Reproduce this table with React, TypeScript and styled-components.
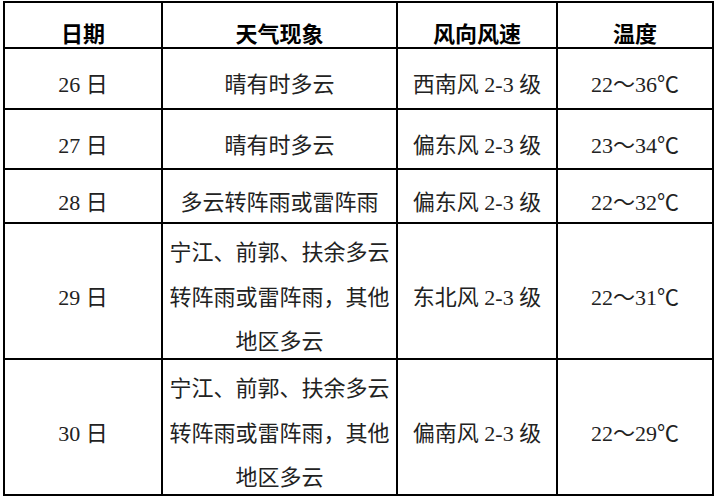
import { Fragment } from "react";
import styled, { createGlobalStyle } from "styled-components";

const GlobalStyle = createGlobalStyle`
  html, body {
    margin: 0;
    padding: 0;
    background: #ffffff;
  }
`;

type Row = {
  date: string;
  weather: string[];
  wind: string;
  temp: string;
};

const rows: Row[] = [
  { date: "26 日", weather: ["晴有时多云"], wind: "西南风 2-3 级", temp: "22～36℃" },
  { date: "27 日", weather: ["晴有时多云"], wind: "偏东风 2-3 级", temp: "23～34℃" },
  { date: "28 日", weather: ["多云转阵雨或雷阵雨"], wind: "偏东风 2-3 级", temp: "22～32℃" },
  {
    date: "29 日",
    weather: ["宁江、前郭、扶余多云", "转阵雨或雷阵雨，其他", "地区多云"],
    wind: "东北风 2-3 级",
    temp: "22～31℃",
  },
  {
    date: "30 日",
    weather: ["宁江、前郭、扶余多云", "转阵雨或雷阵雨，其他", "地区多云"],
    wind: "偏南风 2-3 级",
    temp: "22～29℃",
  },
];

const headers = ["日期", "天气现象", "风向风速", "温度"];

export default function App() {
  return (
    <>
      <GlobalStyle />
      <Sheet>
        {headers.map((h) => (
          <HeadCell key={h}>{h}</HeadCell>
        ))}
        {rows.map((r) => (
          <Fragment key={r.date}>
            <Cell>{r.date}</Cell>
            <Cell>
              {r.weather.map((line) => (
                <Line key={line}>{line}</Line>
              ))}
            </Cell>
            <Cell>{r.wind}</Cell>
            <Cell>{r.temp}</Cell>
          </Fragment>
        ))}
      </Sheet>
    </>
  );
}

const Sheet = styled.div`
  display: grid;
  grid-template-columns: 156px 233px 158px 154px;
  grid-template-rows: 44px 59px 58px 52px 134px 134px;
  gap: 2px;
  padding: 2px;
  width: max-content;
  margin: 1px 0 0 3px;
  background: #000000;
`;

const BaseCell = styled.div`
  display: flex;
  flex-direction: column;
  align-items: center;
  justify-content: center;
  padding-top: 14px;
  box-sizing: border-box;
  background: #ffffff;
  white-space: nowrap;
  font-size: 22px;
  line-height: 44.5px;
`;

const HeadCell = styled(BaseCell)`
  font-family: "Noto Sans CJK SC", sans-serif;
  font-weight: 700;
  color: #000000;
`;

const Cell = styled(BaseCell)`
  font-family: "Liberation Serif", "Noto Sans CJK SC", serif;
  font-weight: 400;
  color: #222222;
`;

const Line = styled.span`
  display: block;
`;
